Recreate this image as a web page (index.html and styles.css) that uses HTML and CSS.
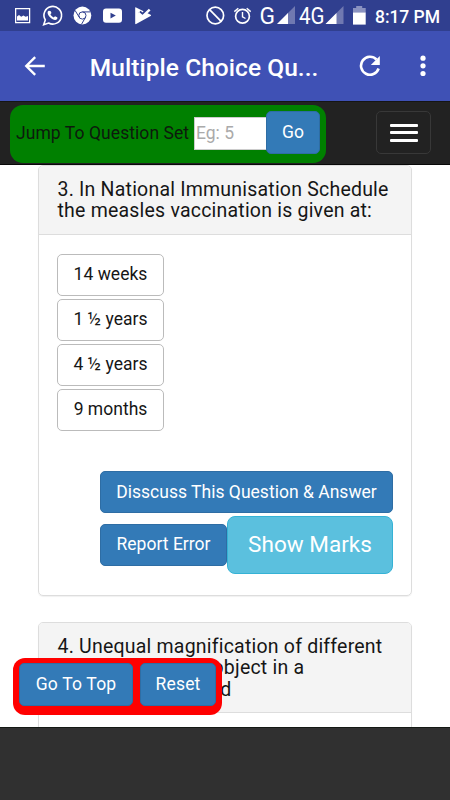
FILE: index.html
```html
<!DOCTYPE html>
<html lang="en">
<head>
<meta charset="utf-8">
<title>Multiple Choice Questions</title>
<link rel="stylesheet" href="styles.css">
</head>
<body>
<div class="phone">
  <header class="status">
    <svg class="status-icons" width="140" height="31" viewBox="0 0 140 31" fill="#fff">
      <path d="M.6 8.6h14v14H.6z" fill="none" stroke="#fff" stroke-width="1.3"/>
      <path d="M2 20.4v-4l2-1.4 2.2 1.8 2.2-1.4 2.2 1.3 2.4-.8v4.5z"/>
      <path d="m28.7 24.7 1.6-4.8a8.8 8.8 0 1 1 3.3 3.1z" fill="none" stroke="#fff" stroke-width="1.6"/>
      <path d="M33.7 10.8c-2 1-1.1 4.2 1.6 6.8 2.4 2.4 5.6 3.3 6.8 1.4.5-.8.4-1.5 0-1.7l-2.1-1.1-1.3 1.2c-1.6-.6-2.7-1.8-3.3-3.1l1.1-1.3-1-2.1z"/>
      <circle cx="67.4" cy="15.5" r="8.9"/>
      <g fill="none" stroke="#303f8f" stroke-width="1"><circle cx="67.4" cy="15.5" r="3.6"/><path d="M67.4 11.9h8M64.3 17.3l-4.2-6.8M70.5 17.3l-4 7"/></g>
      <rect x="88" y="8.5" width="19" height="14.3" rx="3"/>
      <path d="m95.5 12.8 5.3 2.8-5.3 2.8z" fill="#303f8f"/>
      <path d="M120.2 7.8c0-.5.4-.7.9-.4l14.5 7.4c.6.3.6.9 0 1.2L121.1 24c-.5.3-.9.1-.9-.4z"/>
      <path d="m124.4 12 3 3 7.3-7.3" fill="none" stroke="#303f8f" stroke-width="3.6"/>
      <path d="m123.4 12.8 4 3.7 7.3-6.9" fill="none" stroke="#fff" stroke-width="2.4"/>
    </svg>
    <svg class="status-system" width="168" height="31" viewBox="0 0 168 31">
      <g fill="none" stroke="#fff" stroke-width="1.7"><circle cx="10.3" cy="15.5" r="8.3"/><path d="m4.6 9.7 11.5 11.7"/><circle cx="37.5" cy="16.3" r="6.9"/><path d="M37.5 12v4.8l3 1.7M29.3 11.6l4-3.4M41.7 8.2l4 3.4" stroke-width="1.4"/></g>
      <path d="M90 6v18H72zM138.5 6v18h-18z" fill="#7079b1"/>
      <path d="M83 13v11H72zM131.5 13v11h-11z" fill="#fff"/>
      <path d="M151.2 6h6v2h3.5v5H148V8h3.2z" fill="#8a92c0"/><path d="M148 12.6h12.7v12H148z" fill="#fff"/>
      <g fill="#fff" font-family="Roboto, sans-serif" font-size="23.5"><text x="54.5" y="24" textLength="15.5" lengthAdjust="spacingAndGlyphs">G</text><text x="94" y="24" textLength="25.5" lengthAdjust="spacingAndGlyphs">4G</text></g>
    </svg>
    <span class="clock">8:17 PM</span>
  </header>
  <nav class="appbar">
    <svg class="back" width="22" height="22" viewBox="0 0 22 22" fill="none" stroke="#fff" stroke-width="2.4"><path d="M21 11H3M11.3 2 2.3 11l9 9"/></svg>
    <h1>Multiple Choice Qu...</h1>
    <svg class="refresh" width="22" height="22" viewBox="0 0 22 22"><path d="M17.5 4.5A9 9 0 1 0 19.6 13.5" fill="none" stroke="#fff" stroke-width="2.6"/><path d="M20.8 1v9h-9z" fill="#fff"/></svg>
    <svg class="more" width="6" height="22" viewBox="0 0 6 22" fill="#fff"><circle cx="3" cy="3.2" r="2.6"/><circle cx="3" cy="10.8" r="2.6"/><circle cx="3" cy="18.5" r="2.6"/></svg>
  </nav>
  <div class="navbar">
    <form class="jump">
      <label for="set">Jump To Question Set</label>
      <input id="set" type="text" placeholder="Eg: 5">
      <button class="btn" type="button">Go</button>
    </form>
    <button class="toggle" type="button" aria-label="Menu"><i></i><i></i><i></i></button>
  </div>
  <main>
    <section class="panel">
      <h2><span class="line">3. In National Immunisation Schedule</span><span class="line">the measles vaccination is given at:</span></h2>
      <div class="answers">
        <button class="btn option">14 weeks</button>
        <button class="btn option">1 ½ years</button>
        <button class="btn option">4 ½ years</button>
        <button class="btn option">9 months</button>
      </div>
      <div class="actions">
        <button class="btn discuss">Disscuss This Question &amp; Answer</button>
        <div class="row"><button class="btn report">Report Error</button><button class="btn marks">Show Marks</button></div>
      </div>
    </section>
    <section class="panel next">
      <h2><span class="line">4. Unequal magnification of different</span><span class="line"><span class="tight">parts of the same </span>object in a</span><span class="line short">microscopic field</span></h2>
    </section>
  </main>
  <div class="floating"><button class="btn top">Go To Top</button><button class="btn reset">Reset</button></div>
  <footer></footer>
</div>
</body>
</html>
```

FILE: styles.css
```css
* { box-sizing: border-box; }
body { margin: 0; font-family: Roboto, sans-serif; color: #161616; background: #fff; }
button, input { font-family: inherit; }
.phone { width: 450px; height: 800px; display: flex; flex-direction: column; position: relative; overflow: hidden; }
.status { height: 31px; flex: none; display: flex; align-items: center; background: #303f8f; color: #fff; padding-left: 15px; }
.status-system { margin-left: 50px; flex: none; }
.clock { font-size: 17.5px; font-weight: 500; letter-spacing: -.05px; margin: 3px 0 0 2px; white-space: nowrap; }
.appbar { height: 70px; flex: none; display: flex; align-items: center; background: #3f51b5; color: #fff; padding: 0 24px 0 24px; }
.appbar h1 { margin: 2px 0 0 44px; width: 269px; font-size: 24.5px; font-weight: 500; white-space: nowrap; letter-spacing: .05px; }
.refresh { flex: none; margin: 0 -3px 0 0; position: relative; left: 3px; }
.more { margin-left: 45px; flex: none; }
.navbar { height: 64px; flex: none; display: flex; background: #222; border-top: 1px solid #151515; border-bottom: 1px solid #080808; padding: 3px 19px 0 10px; justify-content: space-between; }
.jump { width: 316px; height: 58px; background: #008000; border-radius: 13px; display: flex; align-items: flex-start; padding: 6px 6px 0; }
.jump label { width: 178px; font-size: 17.5px; line-height: 44px; letter-spacing: .07px; white-space: nowrap; color: #0d1a0d; }
.jump input { width: 73px; height: 33px; margin-top: 6px; border: 1px solid #ccc; padding: 0 2px 2px 1px; font-size: 17.5px; border-radius: 0; letter-spacing: 0; }
.jump input::placeholder { color: #aaa; }
.btn { height: 42px; border: 1px solid #2e6da4; border-radius: 5px; background: #337ab7; color: #fff; font-size: 17.5px; letter-spacing: .02px; padding: 0 0 2px; white-space: nowrap; }
.jump .btn { width: 54px; height: 43px; margin-left: -1px; }
.toggle { width: 55px; height: 43px; margin-top: 6px; background: #222; border: 1px solid #383838; border-radius: 5px; display: flex; flex-direction: column; align-items: center; justify-content: center; gap: 5px; padding: 0; }
.toggle i { width: 28px; height: 3px; background: #fff; border-radius: 1px; flex: none; margin-bottom: -.4px; }
main { flex: 1; min-height: 0; overflow: hidden; padding: 0 38px; }
.panel { border: 1px solid #ddd; border-radius: 5px; height: 431px; box-shadow: 0 1px 1px rgba(0,0,0,.06); overflow: hidden; }
.panel h2 { margin: 0; background: #f4f4f4; border-bottom: 1px solid #ddd; padding: 13px 0 12px 18.5px; height: 69px; font-size: 19.5px; font-weight: 400; line-height: 21.3px; }
.line { display: block; white-space: nowrap; letter-spacing: .21px; }
.tight { letter-spacing: -.16px; }
.short { width: 174px; text-align-last: justify; }
.answers { display: flex; flex-direction: column; gap: 3px; padding: 19px 0 0 18px; }
.option { width: 107px; background: #fff; color: #161616; border-color: #bbb; }
.actions { padding: 40px 18px 0 61px; display: flex; flex-direction: column; align-items: flex-end; gap: 3px; }
.discuss { width: 293px; padding-bottom: 1px; }
.row { display: flex; align-items: center; }
.report { width: 127px; }
.marks { width: 166px; height: 58px; background: #5bc0de; border-color: #35b2d5; font-size: 22.5px; border-radius: 8px; padding-bottom: 3px; }
.next { margin-top: 26px; }
.next h2 { height: 90px; }
.floating { position: absolute; left: 13px; top: 658px; width: 209px; height: 57px; background: #f00; border-radius: 12px; display: flex; gap: 7px; padding: 5px 6px; }
.floating .btn { height: 43px; letter-spacing: .2px; }
.top { width: 114px; }
.reset { width: 76px; }
footer { height: 73px; flex: none; background: #303030; border-top: 1px solid #141914; }
```
